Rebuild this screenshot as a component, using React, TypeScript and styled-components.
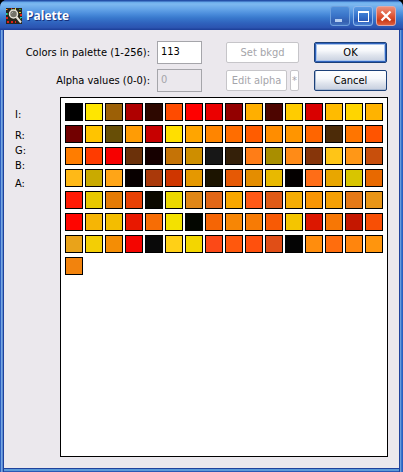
import React from "react";
import styled, { createGlobalStyle } from "styled-components";

const GlobalStyle = createGlobalStyle`
  * { box-sizing: border-box; }
  body { margin: 0; background: #000; }
  body, button, input { font: 11px/14px "DejaVu Sans Condensed", "DejaVu Sans", sans-serif; font-stretch: condensed; color: #000; }
`;

const Window = styled.main`
  display: flex;
  flex-direction: column;
  min-height: 100vh;
  padding: 0 4px 4px;
  border-radius: 7px 7px 0 0;
  background:
    linear-gradient(90deg, #2c5fc0 0 1px, #76a6e2 1px 2px, #5a8ad2 2px 3px, #1f429c 3px 4px, transparent 4px) left / 4px 100% no-repeat,
    linear-gradient(270deg, #2c5fc0 0 1px, #3a76cb 1px 2px, #6a9bdd 2px 3px, #1f429c 3px 4px, transparent 4px) right / 4px 100% no-repeat,
    linear-gradient(0deg, #2a58b4 0 1px, #5c9ad8 1px 3px, #1f429c 3px 4px) bottom / 100% 4px no-repeat,
    #3a70c8;
`;

const TitleBar = styled.header`
  display: flex;
  align-items: center;
  gap: 4px;
  height: 30px;
  margin: 0 -4px;
  padding: 2px 7px 0 6px;
  border-radius: 7px 7px 0 0;
  background: linear-gradient(#2450a8 0 1px, #66a9ea 2px, #7db9f0 4px, #65a5e8 9px, #4a8cdb 14px, #3878cc 18px, #2f62bd 23px, #2b53b0 28px, #1f429c 29px);
`;

const Title = styled.h1`
  flex: 1;
  margin: 0;
  color: #fff;
  font: bold 12px/18px "Open Sans", "Noto Sans", sans-serif;
  text-shadow: 1px 1px #16307c;
`;

const Controls = styled.div`
  display: flex;
  gap: 3px;
`;

const CaptionButton = styled.button<{ $kind: "min" | "max" | "close" }>`
  width: 20px;
  height: 20px;
  padding: 0;
  border: 1px solid ${p => (p.$kind === "close" ? "#dfa9a9" : p.$kind === "max" ? "#8fb7ea" : "#6e9fdc")};
  border-radius: 3px;
  background: ${p => (p.$kind === "close"
    ? "linear-gradient(#ee8f78, #dc5030 55%, #c93d1c 75%, #e06040)"
    : p.$kind === "max"
      ? "linear-gradient(#5b9be3, #3472cc 50%, #2b5bb8 75%, #4b83d4)"
      : "linear-gradient(#5090da, #3973c8 50%, #345fb0 80%, #4172c0)")};
  svg { display: block; }
`;

const Body = styled.div`
  display: flex;
  flex: 1;
  flex-direction: column;
  gap: 5px;
  padding: 11px;
  background: #ebe8ed;
`;

const Settings = styled.form`
  display: grid;
  grid-template-columns: minmax(0, 1fr) auto auto;
  margin-right: 1px;
`;

const Fields = styled.div`
  display: grid;
  grid-template-columns: 1fr 45px;
  row-gap: 5px;
  align-items: center;
`;

const Label = styled.label`
  padding-right: 7px;
  text-align: right;
  white-space: nowrap;
`;

const Field = styled.input`
  width: 100%;
  height: 23px;
  padding: 0 3px 2px;
  border: 1px solid #a5a5aa;
  border-radius: 0;
  background: #fff;
  outline: none;
  &:disabled { background: #ebe8ed; color: #a5a5aa; }
`;

const Actions = styled.div<{ $gap: number }>`
  display: grid;
  row-gap: 7px;
  align-content: center;
  width: 73px;
  margin-left: ${p => p.$gap}px;
`;

const Pair = styled.div`
  display: flex;
  gap: 3px;
`;

const Button = styled.button<{ $focus?: boolean; $narrow?: boolean }>`
  flex: ${p => (p.$narrow ? "0 0 9px" : "1")};
  min-width: 0;
  width: 100%;
  height: 21px;
  padding: 0;
  border: 1px solid #1c4078;
  border-radius: 2px;
  white-space: nowrap;
  background: linear-gradient(#fff, #f6f8fb 40%, #dfe4ed 65%, #c5cede);
  box-shadow: ${p => (p.$focus ? "inset 0 0 0 1px #2f62bd, inset 0 0 0 2px #a8c4ec" : "inset 1px 0 #a9bad3, inset 0 -1px #a9bad3")};
  &:disabled { border-color: #c6c5c9; background: #fff; box-shadow: none; color: #a5a5aa; }
`;

const Content = styled.div`
  display: flex;
  flex: 1;
`;

const Channels = styled.div`
  display: flex;
  flex-direction: column;
  width: 45px;
  padding-top: 11px;
`;

const Channel = styled.span<{ $after?: number }>`
  height: 15px;
  line-height: 14px;
  margin-bottom: ${p => p.$after ?? 0}px;
`;

const Palette = styled.div`
  flex: 1;
  display: grid;
  grid-template-columns: repeat(auto-fill, 18px);
  grid-auto-rows: 18px;
  gap: 4px 2px;
  align-content: start;
  padding: 5px 4px;
  border: 1px solid #000;
  background: #fff;
`;

const Swatch = styled.button<{ $color: string }>`
  padding: 0;
  border: 1px solid #000;
  border-radius: 0;
  background: ${p => p.$color};
`;

const colors = `
000000 ffe600 9c6006 af0000 2d0800 ff4b00 ff0000 eb0000 930000 ffaf00 4d0500 ffcc00 d90000 ffbb00 ffd500 ffb300
720000 ffc400 674e06 ff9c05 c70000 ffdf00 ffa500 ff8500 ff6d00 ff5c00 ff8d00 ff9500 ff6500 4c2b08 ff7500 ff5400
ff7d00 ff3b00 f70000 6b310a 160000 c57306 ce8e00 171717 342009 ff7d17 a98e00 ff8b17 86350a ffc517 ff9717 c84f0c
ffb917 c9aa00 ffa517 080000 aa390a cf3600 e59800 1c1400 e65905 e48d00 e8b900 040000 ff6d17 e8a600 d8c500 e86900
ff1b05 e8c800 e47b05 e84105 0c0900 ecd800 e08717 e26717 f8a700 ff5917 e05b17 f5ad05 f89605 f5a005 e57917 e99517
ff0500 f6b505 f3bd00 e81800 f76d05 f3e100 030600 f56505 f78605 f77b05 f85a05 f4c500 dc1700 f77705 c41700 f84f05
e9a31a f3ce05 f48d05 f40500 090909 ffd017 f3d600 fc4917 ff580d ff500d e04e17 040404 ff8d0d ff6d0d ff850d ff950d
f2830d`.trim().split(/\s+/);

const AppIcon = () => (
  <svg width="16" height="16" viewBox="0 0 16 16" aria-hidden="true" shapeRendering="crispEdges">
    <path fill="#28261c" d="M0 0h16v16H0z" />
    <path fill="#e02018" d="M1 1h1v1H1zM5 0h1v1H5zM0 9h2v2H0zM1 13h2v2H1zM5 13h2v2H5zM9 13h1v2H9zM14 6h2v2h-2z" />
    <path fill="#22a848" d="M5 1h1v1H5zM13 1h2v1h-2zM1 5h1v2H1zM14 10h1v1h-1z" />
    <path fill="#e8d020" d="M9 0h1v2H9zM0 1h1v1H0zM13 4h2v1h-2z" />
    <path fill="#28bfc8" d="M0 5h1v2H0zM14 9h2v1h-2z" />
    <g shapeRendering="auto" fill="none" stroke="#e7e2d8">
      <circle cx="7.5" cy="6" r="4" fill="#747269" strokeWidth="1.5" />
      <path d="M10.5 9l4.5 5.5" strokeWidth="2" />
      <path d="M5.5 5.5l1.5-1.5" stroke="#aaa" />
    </g>
  </svg>
);

export default function App() {
  return (
    <>
      <GlobalStyle />
      <Window>
        <TitleBar>
          <AppIcon />
          <Title>Palette</Title>
          <Controls>
            <CaptionButton $kind="min" aria-label="Minimize">
              <svg width="18" height="18"><path fill="#b7d0f2" d="M4 12h7v3H4z" /></svg>
            </CaptionButton>
            <CaptionButton $kind="max" aria-label="Maximize">
              <svg width="18" height="18"><path fill="#fff" fillRule="evenodd" d="M4 4h11v11H4zM5 6v8h9V6z" /></svg>
            </CaptionButton>
            <CaptionButton $kind="close" aria-label="Close">
              <svg width="18" height="18"><path d="M4.5 4.5l9 9m0-9l-9 9" stroke="#fff" strokeWidth="2.3" /></svg>
            </CaptionButton>
          </Controls>
        </TitleBar>
        <Body>
          <Settings onSubmit={e => e.preventDefault()}>
            <Fields>
              <Label htmlFor="count">Colors in palette (1-256):</Label>
              <Field id="count" defaultValue="113" />
              <Label htmlFor="alpha">Alpha values (0-0):</Label>
              <Field id="alpha" defaultValue="0" disabled />
            </Fields>
            <Actions $gap={24}>
              <Button type="button" disabled>Set bkgd</Button>
              <Pair>
                <Button type="button" disabled>Edit alpha</Button>
                <Button type="button" disabled $narrow>*</Button>
              </Pair>
            </Actions>
            <Actions $gap={15}>
              <Button $focus>OK</Button>
              <Button type="button">Cancel</Button>
            </Actions>
          </Settings>
          <Content>
            <Channels>
              <Channel $after={6}>I:</Channel>
              <Channel>R:</Channel>
              <Channel>G:</Channel>
              <Channel $after={3}>B:</Channel>
              <Channel>A:</Channel>
            </Channels>
            <Palette>
              {colors.map((c, i) => (
                <Swatch key={i} $color={`#${c}`} aria-label={`Color ${i + 1}`} />
              ))}
            </Palette>
          </Content>
        </Body>
      </Window>
    </>
  );
}
